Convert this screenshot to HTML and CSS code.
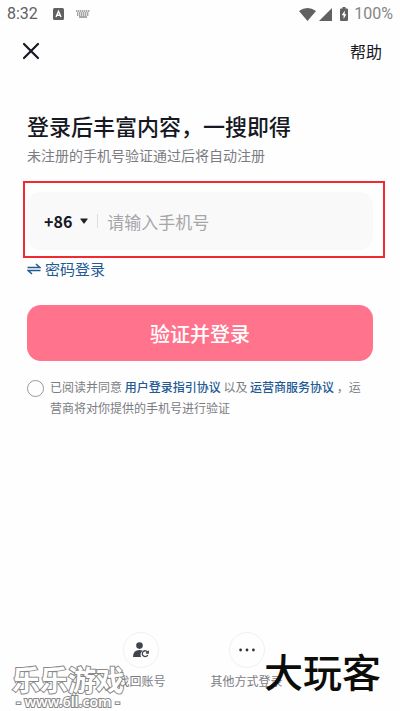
FILE: index.html
```html
<!DOCTYPE html>
<html lang="zh-CN">
<head>
<meta charset="utf-8">
<meta name="viewport" content="width=device-width, initial-scale=1">
<title>登录</title>
<link rel="stylesheet" href="styles.css">
</head>
<body>
<div class="status">
  <span class="time">8:32</span>
  <svg class="ic-a" width="11" height="12" viewBox="0 0 11 12"><rect width="11" height="12" rx="1.5" fill="#616161"/><path d="M3 9 5.5 3.2 8 9M4 7.2h3" fill="none" stroke="#fff" stroke-width="1.4"/></svg>
  <svg class="ic-kb" width="14" height="8" viewBox="0 0 14 8"><path d="M0 1h14M1 3h12M1 5h12" stroke="#8a8a8a" stroke-width="1.300" stroke-dasharray="1.400 .6"/><path d="M3 7h8" stroke="#777" stroke-width="1.300"/></svg>
  <span class="grow"></span>
  <svg width="17" height="13" viewBox="0 0 17 13"><path d="M0 3Q8.500-3 17 3L8.500 13Z" fill="#616161"/></svg>
  <svg class="ic-signal" width="13" height="13" viewBox="0 0 13 13"><path d="M13 0V13H0Z" fill="#616161"/></svg>
  <svg class="ic-bat" width="8" height="14" viewBox="0 0 8 14"><path d="M2.500 0h3v1.500H7q1 0 1 1V13q0 1-1 1H1q-1 0-1-1V2.500q0-1 1-1h1.500Z" fill="#616161"/><path d="M4.800 3.500 1.700 8.300h1.900V12L6.400 7.200H4.700Z" fill="#fff"/></svg>
  <span class="percent">100%</span>
</div>
<header class="top">
  <button class="close" type="button" aria-label="关闭"><svg width="18" height="18" viewBox="0 0 18 18"><path d="M2 2 16 16M16 2 2 16" stroke="#161823" stroke-width="2.200" stroke-linecap="round"/></svg></button>
  <a class="help" href="#">帮助</a>
</header>
<main class="main">
  <h1>登录后丰富内容，一搜即得</h1>
  <p class="sub">未注册的手机号验证通过后将自动注册</p>
  <form>
    <div class="field">
      <button class="code" type="button">+86<svg width="8" height="6" viewBox="0 0 8 6"><path d="M.8.500h6.400q.8 0 .3.700L4.600 5.200q-.6.700-1.200 0L.5 1.200Q0 .5.800.500Z" fill="#222"/></svg></button>
      <span class="divider"></span>
      <input type="tel" placeholder="请输入手机号" aria-label="手机号">
      <span class="frame"></span>
    </div>
    <a class="switch" href="#"><svg width="14" height="12" viewBox="0 0 14 12"><path d="M.5 4.600H13L9 1M13.500 7.400H1L5 11" fill="none" stroke="#235a94" stroke-width="1.500"/></svg>密码登录</a>
    <button class="submit" type="submit">验证并登录</button>
    <div class="agree">
      <input type="checkbox" id="agree">
      <label for="agree">已阅读并同意 <a href="#">用户登录指引协议</a> 以及 <a href="#">运营商服务协议</a> ，运营商将对你提供的手机号进行验证</label>
    </div>
  </form>
</main>
<footer class="foot">
  <a class="option" href="#"><span class="round"><svg width="18" height="16" viewBox="0 0 18 16"><circle cx="7.500" cy="3.600" r="3.300" fill="#41434f"/><path d="M1 15q0-7 6.500-7 2 0 3.200.8Q7.500 11 9 15Z" fill="#41434f"/><path d="M15.600 10A2.900 2.900 0 1 0 15.800 13M16.300 8.700V11h-2.400" fill="none" stroke="#41434f" stroke-width="1.300"/></svg></span>找回账号</a>
  <a class="option" href="#"><span class="round"><svg width="16" height="4" viewBox="0 0 16 4"><g fill="#30323e"><circle cx="1.600" cy="2" r="1.400"/><circle cx="8" cy="2" r="1.400"/><circle cx="14.400" cy="2" r="1.400"/></g></svg></span>其他方式登录</a>
</footer>
<div class="mark mark-left"><span class="mark-name">乐乐游戏</span><span class="mark-url">- www.6ll.com -</span></div>
<div class="mark mark-right">大玩客</div>
</body>
</html>
```
FILE: styles.css
```css
* { box-sizing: border-box; }
body {
  margin: 0;
  min-height: 100vh;
  position: relative;
  display: flex;
  flex-direction: column;
  background: #fefefe;
  color: #161823;
  font-family: "Noto Sans CJK SC", sans-serif;
}
button, input { font: inherit; color: inherit; border: 0; background: none; padding: 0; margin: 0; }
a { color: #235a94; text-decoration: none; }
svg { display: block; flex: none; }

.status {
  display: flex;
  align-items: center;
  height: 28px;
  padding: 0 7px;
  font: 16px/28px Roboto, sans-serif;
  color: #616161;
}
.ic-a { margin-left: 15px; }
.ic-kb { margin-left: 12px; }
.grow { flex: 1; }
.ic-signal { margin-left: 3px; }
.ic-bat { margin-left: 8px; }
.percent { margin-left: 6px; color: #858585; }

.top {
  display: flex;
  align-items: center;
  justify-content: space-between;
  height: 46px;
  padding: 0 18px 0 22px;
}
.help { color: #161823; font-size: 16px; }

.main { padding: 35px 27px 0; }
h1 { margin: 0; font-size: 22px; line-height: 32px; font-weight: 500; }
.sub { margin: 3px 0 0; font-size: 14px; line-height: 22px; color: #7b7c83; }

.field {
  position: relative;
  display: flex;
  align-items: center;
  height: 58px;
  margin-top: 26px;
  padding: 0 17px;
  border-radius: 14px;
  background: #f9f9f9;
}
.code {
  display: flex;
  align-items: center;
  gap: 8px;
  font-size: 16px;
  font-weight: 700;
}
.divider {
  width: 1px;
  height: 14px;
  margin: 0 9px;
  background: #dedee0;
}
.field input {
  flex: 1;
  min-width: 0;
  height: 30px;
  font-size: 17px;
}
.field input::placeholder { color: #a6a6aa; opacity: 1; }
.frame {
  position: absolute;
  inset: -11px -12px -8px -4px;
  border: 2px solid #f02a30;
  pointer-events: none;
}
.switch {
  display: inline-flex;
  align-items: center;
  gap: 4px;
  margin-top: 8px;
  font-size: 15px;
  line-height: 22px;
}
.submit {
  display: block;
  width: 100%;
  height: 56px;
  margin-top: 25px;
  border-radius: 14px;
  background: #ff738c;
  color: #fff;
  font-size: 20px;
  font-weight: 500;
}
.agree {
  display: flex;
  align-items: flex-start;
  gap: 6px;
  margin-top: 15px;
  padding-right: 4px;
  font-size: 12px;
  line-height: 21px;
  color: #7b7c83;
}
.agree input {
  appearance: none;
  flex: none;
  width: 17px;
  height: 17px;
  margin-top: 4px;
  border: 1px solid #96979c;
  border-radius: 50%;
}
.agree a { font-weight: 500; }

.foot {
  display: flex;
  justify-content: center;
  gap: 45px;
  margin-top: auto;
  padding: 0 0 20px;
}
.option {
  display: flex;
  flex-direction: column;
  align-items: center;
  gap: 3px;
  font-size: 12px;
  line-height: 20px;
  color: #7b7c83;
}
.round {
  display: grid;
  place-items: center;
  width: 36px;
  height: 36px;
  border: 1px solid #f0f0f0;
  border-radius: 50%;
}

.mark { position: absolute; pointer-events: none; white-space: nowrap; }
.mark-left {
  left: 12px;
  bottom: 1px;
  display: flex;
  flex-direction: column;
  align-items: center;
  color: #fff;
  -webkit-text-stroke: 2px #888;
  paint-order: stroke fill;
}
.mark-name { font-size: 28px; line-height: 30px; font-weight: 700; }
.mark-url { font: 600 14px/16px "Noto Sans", sans-serif; }
.mark-right {
  right: 19px;
  bottom: 21px;
  font-size: 39px;
  line-height: 40px;
  font-weight: 500;
  color: #0c0c08;
}
```
